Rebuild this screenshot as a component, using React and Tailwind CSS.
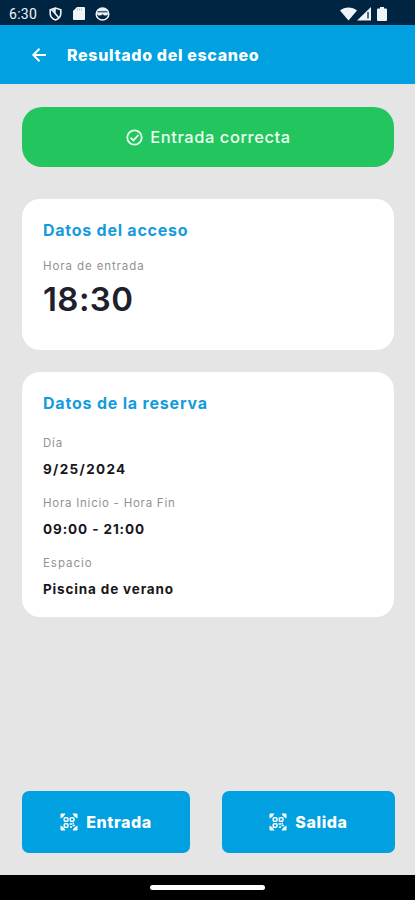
import React from 'react'

const reservation = [
  { label: 'Día', value: '9/25/2024', labelClass: 'tracking-[0.8px]', valueClass: 'tracking-[1.35px]' },
  { label: 'Hora Inicio - Hora Fin', value: '09:00 - 21:00', labelClass: 'tracking-[0.75px]', valueClass: 'tracking-[0.9px]' },
  { label: 'Espacio', value: 'Piscina de verano', labelClass: 'tracking-[0.95px]', valueClass: 'tracking-[0.85px]' },
];

// Android status bar
function StatusBar() {
  return (
    <div className="flex h-[25px] items-center justify-between bg-[#002542] pl-[9px] pr-[28px] pt-[2px] text-[#f1f4f7]">
      <div className="flex items-center">
        <span className="w-[40px] font-[Roboto] text-[14px] leading-4 tracking-[0.3px]">6:30</span>
        <svg className="h-[14px] w-[13px]" viewBox="0 0 13 14" fill="none" stroke="currentColor" strokeWidth="1.6">
          <path d="M6.5 1 1.2 2.8v3.8c0 3 2.2 5.3 5.3 6.4 3.1-1.1 5.3-3.4 5.3-6.4V2.8Z" />
          <path d="M2.8 2.8 10 11" />
          <path d="M6.5 1v4.5L4 3Z" fill="currentColor" strokeWidth=".6" />
        </svg>
        <svg className="ml-[11px] h-[13px] w-[12px]" viewBox="0 0 12 13" fill="currentColor">
          <path d="M4 0h7a1 1 0 0 1 1 1v11a1 1 0 0 1-1 1H1a1 1 0 0 1-1-1V4Z" />
          <path d="M4.5 1.5v2M6.5 1.5v2M8.5 1.5v2" stroke="#a9b3bc" strokeWidth=".8" />
        </svg>
        <svg className="ml-[10px] h-[14px] w-[15px]" viewBox="0 0 15 14" fill="none" stroke="currentColor">
          <ellipse cx="7.5" cy="7" rx="6.3" ry="6" strokeWidth="1.5" />
          <path d="M3 3.8C5 1 10 1 12 3.8Z" fill="currentColor" />
          <path d="M1.5 5.5h12l-1.5 2.7h-3L7.5 7 6 8.2H3Z" fill="currentColor" strokeWidth=".3" />
        </svg>
      </div>
      <div className="flex items-center">
        <svg className="h-[14px] w-[17px]" viewBox="0 0 17 14" fill="currentColor">
          <path d="M0 3.5C4.5-.5 12.5-.5 17 3.5L8.5 13.5Z" />
        </svg>
        <svg className="h-[14px] w-[15px]" viewBox="0 0 15 14">
          <path d="M0 13.5 14 0v13.5Z" fill="#f1f4f7" />
          <path d="M11 5v6.5" stroke="#314c63" strokeWidth="1.6" />
        </svg>
        <svg className="ml-[5px] h-[14px] w-[10px]" viewBox="0 0 10 14" fill="currentColor">
          <path d="M3 0h4v1.5h2a1 1 0 0 1 1 1V13a1 1 0 0 1-1 1H1a1 1 0 0 1-1-1V2.5a1 1 0 0 1 1-1h2Z" />
        </svg>
      </div>
    </div>
  );
}

function BackIcon() {
  return (
    <svg className="size-[20px]" viewBox="0 0 20 20" fill="none" stroke="currentColor" strokeWidth="2">
      <path d="M17 10H4.5M10.5 3.8 4.3 10l6.2 6.2" />
    </svg>
  );
}

function CheckIcon() {
  return (
    <svg className="mr-[6px] size-[19px]" viewBox="0 0 19 19" fill="none" stroke="currentColor" strokeWidth="1.8">
      <circle cx="9.5" cy="9.5" r="7.2" />
      <path d="m5.6 9.7 2.700 2.700 5.200-5.500" />
    </svg>
  );
}

function QrIcon() {
  return (
    <svg className="mr-[8px] size-[18px] shrink-0" viewBox="0 0 18 18" fill="none" stroke="currentColor" strokeWidth="1.4">
      {/* Scanner corners */}
      <path d="M.5 5.5V1.5a1 1 0 0 1 1-1h4L4 3 3 4ZM12.5.5h4a1 1 0 0 1 1 1v4L15 4 14 3ZM17.5 12.5v4a1 1 0 0 1-1 1h-4L14 15l1-1ZM5.5 17.5h-4a1 1 0 0 1-1-1v-4L3 14l1 1Z" fill="currentColor" stroke="none" />
      <rect x="4.2" y="4.7" width="3.8" height="3.6" rx="1" />
      <rect x="10.2" y="4.7" width="3.8" height="3.6" rx="1" />
      <rect x="4.2" y="10.7" width="3.8" height="3.6" rx="1" />
      <path d="M9.5 11h2.5M12.5 12.5h2.5M10 14h2M12.5 10.5h1.5" strokeWidth="1.3" />
    </svg>
  );
}

function CardTitle({ children, className }) {
  return <h2 className={`text-[16px] font-bold leading-5 text-[#159bdc] ${className}`}>{children}</h2>;
}

function ScanButton({ children, className }) {
  return (
    <button className={`flex h-[62px] items-center justify-center rounded-[7px] bg-[#00a0e1] pb-px text-[16px] font-extrabold text-white ${className}`}>
      <QrIcon />
      {children}
    </button>
  );
}

export default function App() {
  return (
    <div className="flex h-[900px] w-[415px] flex-col overflow-hidden bg-[#e5e5e5] font-[Inter,sans-serif]">
      <StatusBar />

      {/* Header */}
      <header className="flex h-[59px] shrink-0 items-center bg-[#00a0e1] pl-[29px] pt-px text-white">
        <BackIcon />
        <h1 className="ml-[18px] whitespace-nowrap text-[16px] font-extrabold leading-5 tracking-[0.65px]">Resultado del escaneo</h1>
      </header>

      <main className="flex flex-1 flex-col pl-[22px] pr-[21px] pt-[23px]">
        {/* Scan result */}
        <div className="flex h-[60px] shrink-0 items-center justify-center rounded-[20px] bg-[#22c55e] text-[16.5px] font-medium tracking-[0.55px] text-[#e9fff0]">
          <CheckIcon />
          <span className="pt-px">Entrada correcta</span>
        </div>

        {/* Access data */}
        <section className="mt-[32px] h-[151px] shrink-0 rounded-[18px] bg-white pl-[21px] pt-[21px]">
          <CardTitle className="tracking-[0.75px]">Datos del acceso</CardTitle>
          <p className="mt-[18px] text-[11.5px] leading-4 tracking-[0.9px] text-[#929292]">Hora de entrada</p>
          <p className="mt-[5px] text-[33px] font-semibold leading-[40px] tracking-[0.4px] text-[#20202c]">18:30</p>
        </section>

        {/* Reservation data */}
        <section className="mt-[22px] h-[245px] shrink-0 rounded-[18px] bg-white pl-[21px] pt-[21px]">
          <CardTitle className="tracking-[0.8px]">Datos de la reserva</CardTitle>
          <div className="mt-[22px] flex flex-col gap-[16px]">
            {reservation.map((item) => (
              <div key={item.label} className="h-[44px]">
                <p className={`text-[11.5px] leading-4 text-[#929292] ${item.labelClass}`}>{item.label}</p>
                <p className={`mt-[9px] text-[13.5px] font-bold leading-[18px] text-[#17171c] ${item.valueClass}`}>{item.value}</p>
              </div>
            ))}
          </div>
        </section>

        {/* Actions */}
        <div className="mb-[22px] mt-auto flex justify-between">
          <ScanButton className="w-[168px] tracking-[0.6px]">Entrada</ScanButton>
          <ScanButton className="-mr-px w-[173px] tracking-[0.6px]">Salida</ScanButton>
        </div>
      </main>

      {/* Gesture bar */}
      <div className="flex h-[25px] shrink-0 items-center justify-center bg-black">
        <div className="h-[5px] w-[115px] rounded-full bg-white" />
      </div>
    </div>
  );
}
